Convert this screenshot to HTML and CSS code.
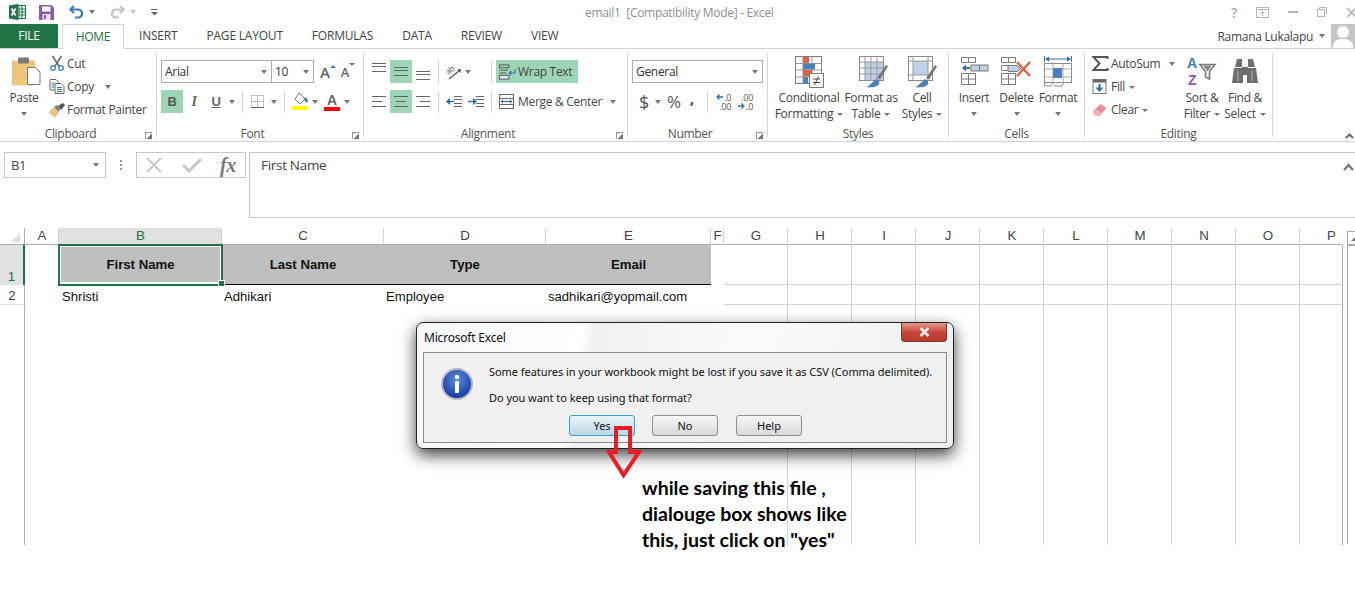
FILE: index.html
```html
<!DOCTYPE html>
<html lang="en">
<head>
<meta charset="UTF-8">
<title>email1 [Compatibility Mode] - Excel</title>
<link rel="stylesheet" href="styles.css">
</head>
<body>

<header class="titlebar">
  <div class="qat">
    <svg class="qat-logo" width="17" height="16" viewBox="0 0 17 16"><rect x="6" y="1.500" width="10.500" height="13" fill="#fff" stroke="#217346"/><path d="M10 2v12M13 2v12M7 5h9M7 8h9M7 11h9" stroke="#217346"/><path d="M0 1.500 9 0v16L0 14.500z" fill="#217346"/><path d="M2.500 4.500 6.500 11.500M6.500 4.500 2.500 11.500" stroke="#fff" stroke-width="1.700"/></svg>
    <svg class="qat-save" width="15" height="15" viewBox="0 0 15 15"><path d="M0 0h12.500L15 2.500V15H0z" fill="#8b5ba8"/><rect x="3" y="1.500" width="8.500" height="5" fill="#fff"/><rect x="3.500" y="9" width="8" height="6" fill="#e9dff0"/><rect x="5" y="10" width="2" height="4" fill="#8b5ba8"/></svg>
    <svg class="qat-undo" width="15" height="14" viewBox="0 0 15 14"><path d="M5 1 1.500 4.500 5 8" fill="none" stroke="#3d7cb8" stroke-width="2.200"/><path d="M2 4.500h6.500c6 0 6 8 .5 8H6" fill="none" stroke="#3d7cb8" stroke-width="2.200"/></svg>
    <span class="caret qat-caret"></span>
    <svg class="qat-redo" width="15" height="14" viewBox="0 0 15 14"><path d="M10 1l3.500 3.500L10 8" fill="none" stroke="#c4c4c4" stroke-width="2.200"/><path d="M13 4.500H6.500c-6 0-6 8-.5 8h3" fill="none" stroke="#c4c4c4" stroke-width="2.200"/></svg>
    <span class="caret caret-off qat-caret"></span>
    <svg class="qat-more" width="7" height="7" viewBox="0 0 7 7"><path d="M0 .5h6.500" stroke="#666"/><path d="M0 3h7L3.500 6.500z" fill="#666"/></svg>
  </div>
  <div class="doc-title">email1&nbsp; [Compatibility Mode] - Excel</div>
  <div class="win-controls">
    <span class="help-mark">?</span>
    <svg width="13" height="11" viewBox="0 0 13 11"><rect x=".5" y=".5" width="12" height="10" fill="none" stroke="#b5b5b5"/><path d="M.5 2.500h12" stroke="#b5b5b5"/><path d="M6.500 9V5M4.500 6.500l2-2 2 2" fill="none" stroke="#b5b5b5"/></svg>
    <svg width="10" height="2" viewBox="0 0 10 2"><rect width="10" height="2" fill="#b5b5b5"/></svg>
    <svg width="10" height="10" viewBox="0 0 10 10"><path d="M2.500 2.500V.5h7v6h-2" fill="none" stroke="#b5b5b5"/><rect x=".5" y="2.500" width="7" height="7" fill="none" stroke="#b5b5b5"/></svg>
    <svg width="11" height="11" viewBox="0 0 11 11"><path d="M1 1l9 9M10 1l-9 9" stroke="#b5b5b5" stroke-width="1.600"/></svg>
  </div>
</header>

<nav class="tabs">
  <div class="tab-file">FILE</div>
  <div class="tab-home">HOME</div>
  <div class="tab">INSERT</div>
  <div class="tab">PAGE LAYOUT</div>
  <div class="tab">FORMULAS</div>
  <div class="tab">DATA</div>
  <div class="tab">REVIEW</div>
  <div class="tab">VIEW</div>
  <div class="account">
    <span>Ramana Lukalapu</span>
    <span class="caret"></span>
    <svg class="avatar" width="24" height="24" viewBox="0 0 24 24"><rect width="24" height="24" fill="#c6c6c6"/><circle cx="12" cy="8" r="6" fill="#fff"/><path d="M2 24c0-7 4-9 10-9s10 2 10 9z" fill="#fff"/></svg>
  </div>
</nav>

<section class="ribbon">

  <div class="group group-clipboard">
    <div class="group-body">
      <div class="big big-paste">
        <svg width="29" height="31" viewBox="0 0 29 31"><rect x="0" y="4" width="23" height="25" rx="1" fill="#edc57d"/><rect x="6" y="1" width="11" height="6" rx="1" fill="#7a7a7a"/><path d="M15.500 11h8l4.500 4.500V28h-12.500z" fill="#fff" stroke="#7a7a7a"/></svg>
        <span>Paste</span>
        <span class="caret"></span>
      </div>
      <div class="stack">
        <div class="small-row"><svg width="14" height="15" viewBox="0 0 14 15"><path d="M2.500 0 9 10M11.500 0 5 10" stroke="#666" stroke-width="1.500"/><circle cx="3" cy="12" r="2.300" fill="none" stroke="#3d7cb8" stroke-width="1.300"/><circle cx="11" cy="12" r="2.300" fill="none" stroke="#3d7cb8" stroke-width="1.300"/></svg><span>Cut</span></div>
        <div class="small-row"><svg width="15" height="15" viewBox="0 0 15 15"><path d="M.5.500h6l2 2V11H.500z" fill="#fff" stroke="#666"/><path d="M5.500 4.500h6l3 3V14.500h-9z" fill="#fff" stroke="#666"/><path d="M2 4h3M2 6h3M2 8h3M7.500 8.500h5M7.500 10.500h5M7.500 12.500h5" stroke="#3d7cb8"/></svg><span>Copy</span><span class="caret caret-copy"></span></div>
        <div class="small-row"><svg width="16" height="14" viewBox="0 0 16 14"><path d="M0 9 5 4l5 5-3 5c-3 0-5-2-7-5z" fill="#edc57d"/><path d="M5 4l3-2 3 4-1 3z" fill="#7a7a7a"/><path d="M9 3l5-3 2 2-4 5z" fill="#555"/></svg><span>Format Painter</span></div>
      </div>
    </div>
    <div class="group-label label-launch">Clipboard<span class="launcher"></span></div>
  </div>

  <div class="group group-font">
    <div class="group-body tool-rows">
      <div class="tool-row">
        <div class="select font-name"><span>Arial</span><span class="caret"></span></div>
        <div class="select font-size"><span>10</span><span class="caret"></span></div>
        <div class="grow-a">A<i class="tick tick-up"></i></div>
        <div class="shrink-a">A<i class="tick tick-down"></i></div>
      </div>
      <div class="tool-row">
        <div class="tool tool-on font-b">B</div>
        <div class="tool font-i">I</div>
        <div class="tool font-u">U</div>
        <span class="caret caret-u"></span>
        <span class="tool-sep sep-font1"></span>
        <svg class="border-icon" width="13" height="13" viewBox="0 0 13 13"><path d="M.5.500h12v12H.500zM6.500.500v12M.5 6.500h12" fill="none" stroke="#888" stroke-dasharray="1 1"/><path d="M0 12.500h13" stroke="#666"/></svg>
        <span class="caret"></span>
        <span class="tool-sep sep-font2"></span>
        <svg class="fill-icon" width="17" height="18" viewBox="0 0 17 18"><path d="M7 0l6 6-5 5-5-5z" fill="#fff" stroke="#777"/><path d="M13 4l3 3-1 3-2-2z" fill="#3d7cb8"/><rect y="13" width="16" height="4" fill="#ffff00"/></svg>
        <span class="caret"></span>
        <div class="color-a">A</div>
        <span class="caret"></span>
      </div>
    </div>
    <div class="group-label label-launch">Font<span class="launcher"></span></div>
  </div>

  <div class="group group-align">
    <div class="group-body tool-rows">
      <div class="tool-row">
        <div class="tool"><i class="lines lines-top"></i></div>
        <div class="tool tool-on"><i class="lines"></i></div>
        <div class="tool"><i class="lines lines-bottom"></i></div>
        <span class="tool-sep sep-a1"></span>
        <svg class="orient-icon" width="16" height="16" viewBox="0 0 16 16"><text x="0" y="9" transform="rotate(-40 4 7)" class="orient-text">ab</text><path d="M3 15 14 6" stroke="#555" stroke-width="1.200"/><path d="M15 5l-4 .5L14.500 9z" fill="#555"/></svg>
        <span class="caret caret-orient"></span>
        <span class="tool-sep sep-a2"></span>
        <div class="wrap-text">
          <svg width="17" height="16" viewBox="0 0 18 16"><rect x=".5" y=".5" width="10" height="3" fill="none" stroke="#555"/><path d="M.5 6h9M.5 9h7" stroke="#555"/><rect x=".5" y="11.500" width="10" height="4" fill="#dde9f3" stroke="#555"/><path d="M17 5v4h-6M13 7l-2 2 2 2" fill="none" stroke="#2f6ea8" stroke-width="1.200"/></svg>
          <span>Wrap Text</span>
        </div>
      </div>
      <div class="tool-row">
        <div class="tool"><i class="lines lines-left"></i></div>
        <div class="tool tool-on"><i class="lines lines-center"></i></div>
        <div class="tool"><i class="lines lines-right"></i></div>
        <span class="tool-sep sep-a1"></span>
        <svg width="17" height="11" viewBox="0 0 17 11"><path d="M8 .5h8M8 3.500h8M8 7.500h8M8 10.500h8M1 5.500h6" stroke="#666"/><path d="M0 5.500 4 2v7z" fill="#2f6ea8"/><path d="M1 5.500h7" stroke="#2f6ea8" stroke-width="1.400"/></svg>
        <svg class="indent-two" width="17" height="11" viewBox="0 0 17 11"><path d="M8 .5h8M8 3.500h8M8 7.500h8M8 10.500h8" stroke="#666"/><path d="M9 5.500 5 2v7z" fill="#2f6ea8"/><path d="M0 5.500h7" stroke="#2f6ea8" stroke-width="1.400"/></svg>
        <span class="tool-sep sep-a3"></span>
        <div class="merge">
          <svg width="15" height="15" viewBox="0 0 15 15"><rect x=".5" y=".5" width="14" height="14" fill="#fff" stroke="#666"/><path d="M.5 4.500h14M.5 10.500h14" stroke="#666"/><path d="M3 7.500h9" stroke="#2f6ea8"/><path d="M1.500 7.500 4 5.500v4zM13.500 7.500 11 5.500v4z" fill="#2f6ea8"/></svg>
          <span>Merge &amp; Center</span>
          <span class="caret caret-merge"></span>
        </div>
      </div>
    </div>
    <div class="group-label label-launch">Alignment<span class="launcher"></span></div>
  </div>

  <div class="group group-number">
    <div class="group-body tool-rows">
      <div class="tool-row">
        <div class="select number-format"><span>General</span><span class="caret"></span></div>
      </div>
      <div class="tool-row number-tools">
        <span class="num-dollar">$</span>
        <span class="caret"></span>
        <span class="num-percent">%</span>
        <span class="num-comma">,</span>
        <span class="tool-sep sep-n"></span>
        <div class="decimal">
          <span class="dec-line"><svg width="7" height="6" viewBox="0 0 7 6"><path d="M7 3H2M3.500.5 1 3l2.500 2.500" fill="none" stroke="#2f6ea8" stroke-width="1.300"/></svg>.0</span>
          <span class="dec-line">.00</span>
        </div>
        <div class="decimal decimal-two">
          <span class="dec-line">.00</span>
          <span class="dec-line"><svg width="7" height="6" viewBox="0 0 7 6"><path d="M0 3h5M3.500.5 6 3 3.500 5.500" fill="none" stroke="#2f6ea8" stroke-width="1.300"/></svg>.0</span>
        </div>
      </div>
    </div>
    <div class="group-label label-launch">Number<span class="launcher"></span></div>
  </div>

  <div class="group group-styles">
    <div class="group-body">
      <div class="big big-cond">
        <svg width="29" height="32" viewBox="0 0 29 32"><rect x=".5" y=".5" width="26" height="27" fill="#fff" stroke="#7a7a7a"/><path d="M.5 7.500h26M.5 14h26M.5 21h26M8 .5v27M17 .5v27" stroke="#9a9a9a"/><rect x="8" y="1" width="6" height="6" fill="#dd6442"/><rect x="8" y="7.500" width="12" height="6" fill="#4c82ba"/><rect x="8" y="14" width="9" height="6.500" fill="#dd6442"/><rect x="8" y="21" width="5" height="6.500" fill="#4c82ba"/><rect x="14.500" y="17.500" width="14" height="14" fill="#fff" stroke="#7a7a7a"/><path d="M18 23h7M18 26.500h7M23.500 20.500 19.500 29" stroke="#444"/></svg>
        <span>Conditional</span>
        <span>Formatting<i class="caret caret-text"></i></span>
      </div>
      <div class="big big-table">
        <svg width="29" height="32" viewBox="0 0 29 32"><rect x=".5" y=".5" width="24" height="24" fill="#fff" stroke="#8a8a8a"/><rect x="6" y="6" width="18" height="18" fill="#bdd0e6"/><path d="M.5 6h24M.5 12h24M.5 18h24M6 .500v24M12 .500v24M18 .500v24" stroke="#9a9a9a"/><path d="M18 22 27 9l2 1.500-8 13z" fill="#777"/><path d="M7 31c4-1 6-5 10-8 3 1 4 3 3 5-1 3-9 4-13 3z" fill="#4c82ba"/></svg>
        <span>Format as</span>
        <span>Table<i class="caret caret-text"></i></span>
      </div>
      <div class="big big-cell">
        <svg width="29" height="32" viewBox="0 0 29 32"><rect x=".5" y=".5" width="24" height="24" fill="#fff" stroke="#8a8a8a"/><rect x="5" y="5" width="15" height="14" fill="#bdd0e6"/><path d="M.5 5h24M.5 19h24M5 .500v24M20 .500v24" stroke="#9a9a9a"/><path d="M18 22 27 9l2 1.500-8 13z" fill="#777"/><path d="M7 31c4-1 6-5 10-8 3 1 4 3 3 5-1 3-9 4-13 3z" fill="#4c82ba"/></svg>
        <span>Cell</span>
        <span>Styles<i class="caret caret-text"></i></span>
      </div>
    </div>
    <div class="group-label">Styles</div>
  </div>

  <div class="group group-cells">
    <div class="group-body">
      <div class="big big-insert">
        <svg width="27" height="32" viewBox="0 0 27 32"><path d="M.5 1.500h14v5H.500zM7.500 1.500v5M.5 17.500h14v11H.500zM.5 23h14M7.500 17.500v11" fill="#fff" stroke="#7a7a7a"/><rect x="10" y="9" width="17" height="6" fill="#bdd0e6" stroke="#7a7a7a"/><path d="M18.500 9v6" stroke="#7a7a7a"/><path d="M1 12l4-3.500v2.500h4v2H5v2.500z" fill="#2f6ea8"/></svg>
        <span>Insert</span>
        <span class="caret"></span>
      </div>
      <div class="big big-delete">
        <svg width="31" height="32" viewBox="0 0 31 32"><path d="M.5 1.500h14v5H.500zM7.500 1.500v5M.5 17.500h14v11H.500zM.5 23h14M7.500 17.500v11M.5 9.500h14v5H.500z" fill="#fff" stroke="#7a7a7a"/><path d="M7 9.500h9l4 3-4 3H7z" fill="#bdd0e6" stroke="#7a7a7a"/><path d="M16 6l13 14M29 6 16 20" stroke="#dd6442" stroke-width="2.400"/></svg>
        <span>Delete</span>
        <span class="caret"></span>
      </div>
      <div class="big big-format">
        <svg width="29" height="32" viewBox="0 0 29 32"><path d="M.5 0v6M27.500 0v6" stroke="#2f6ea8"/><path d="M2 3h24" stroke="#2f6ea8"/><path d="M1 3l4-2.500v5zM27 3l-4-2.500v5z" fill="#2f6ea8"/><rect x=".5" y="7.500" width="27" height="19" fill="#fff" stroke="#8a8a8a"/><path d="M.5 13h27M.5 21h27M9 7.500v19M19 7.500v19" stroke="#aaa"/><rect x="9" y="12" width="9" height="10" fill="#4c82ba"/><path d="M.5 27v3h6l3-3M10 30h7l3-3" fill="none" stroke="#8a8a8a"/></svg>
        <span>Format</span>
        <span class="caret"></span>
      </div>
    </div>
    <div class="group-label">Cells</div>
  </div>

  <div class="group group-editing">
    <div class="group-body">
      <div class="stack stack-edit">
        <div class="small-row"><svg width="15" height="15" viewBox="0 0 15 15"><path d="M15 3V1H1l6 6.500L1 14h14v-2" fill="none" stroke="#555" stroke-width="2"/></svg><span>AutoSum</span><span class="caret caret-sum"></span></div>
        <div class="small-row"><svg width="15" height="15" viewBox="0 0 15 15"><rect x=".5" y=".5" width="13" height="14" fill="#fff" stroke="#777"/><rect x=".5" y=".5" width="13" height="3" fill="#666"/><path d="M7 5v6" stroke="#2f6ea8" stroke-width="2"/><path d="M3 8.500h8l-4 4.500z" fill="#2f6ea8"/></svg><span>Fill<i class="caret caret-text"></i></span></div>
        <div class="small-row"><svg width="15" height="14" viewBox="0 0 15 14"><path d="M0 9 8 1l6 4-7 8H3z" fill="#ea8c97"/><path d="M0 9l3 4h4l2-2.500-5-4z" fill="#f3b6bd"/></svg><span>Clear<i class="caret caret-text"></i></span></div>
      </div>
      <div class="big big-sort">
        <svg width="30" height="32" viewBox="0 0 30 32"><text x="0" y="12" class="az az-a">A</text><text x="1" y="28.500" class="az az-z">Z</text><path d="M13 8.500h15l-5.500 7V23l-4-2v-5.500z" fill="#fff" stroke="#777" stroke-width="1.600"/><path d="M16 9.500h9l-4.500 6z" fill="#888"/></svg>
        <span>Sort &amp;</span>
        <span>Filter<i class="caret caret-text"></i></span>
      </div>
      <div class="big big-find">
        <svg width="26" height="26" viewBox="0 0 26 26"><path d="M3 8 5 0h5v8zM16 8V0h5l2 8z" fill="#6e6e6e"/><path d="M0 24 2 9h9v15zM15 24V9h9l2 15z" fill="#6e6e6e"/><rect x="10" y="8" width="6" height="8" fill="#6e6e6e"/><path d="M6 12v10M20 12v10" stroke="#b8b8b8"/></svg>
        <span>Find &amp;</span>
        <span>Select<i class="caret caret-text"></i></span>
      </div>
    </div>
    <div class="group-label">Editing</div>
  </div>

  <svg class="ribbon-collapse" width="9" height="6" viewBox="0 0 9 6"><path d="M1 5l3.500-3.500L8 5" fill="none" stroke="#666" stroke-width="2"/></svg>
</section>

<section class="formula-bar">
  <div class="name-box"><span>B1</span><span class="caret"></span></div>
  <div class="dots"><i></i><i></i><i></i></div>
  <div class="fx-box">
    <svg width="20" height="17" viewBox="0 0 20 17"><path d="M2 1l14 14M16 1 2 15" stroke="#c8c8c8" stroke-width="2"/></svg>
    <svg width="20" height="16" viewBox="0 0 20 16"><path d="M1 8l6 6L19 2" fill="none" stroke="#c8c8c8" stroke-width="3"/></svg>
    <span class="fx-mark">fx</span>
  </div>
  <div class="formula-input">
    <span>First Name</span>
    <svg class="formula-chevron" width="11" height="8" viewBox="0 0 11 8"><path d="M1 7l4.500-5L10 7" fill="none" stroke="#777" stroke-width="2.400"/></svg>
  </div>
</section>

<section class="sheet">
  <div class="grid">
    <div class="col-head corner"><i class="corner-mark"></i></div>
    <div class="col-head">A</div>
    <div class="col-head col-active">B</div>
    <div class="col-head">C</div>
    <div class="col-head">D</div>
    <div class="col-head">E</div>
    <div class="col-head">F</div>
    <div class="col-head">G</div>
    <div class="col-head">H</div>
    <div class="col-head">I</div>
    <div class="col-head">J</div>
    <div class="col-head">K</div>
    <div class="col-head">L</div>
    <div class="col-head">M</div>
    <div class="col-head">N</div>
    <div class="col-head">O</div>
    <div class="col-head col-last">P</div>

    <div class="row-head row-active">1</div>
    <div class="cell"></div>
    <div class="cell cell-title cell-selected">First Name</div>
    <div class="cell cell-title">Last Name</div>
    <div class="cell cell-title">Type</div>
    <div class="cell cell-title">Email</div>
    <div class="cell"></div>
    <div class="cell cell-line"></div>
    <div class="cell cell-line"></div>
    <div class="cell cell-line"></div>
    <div class="cell cell-line"></div>
    <div class="cell cell-line"></div>
    <div class="cell cell-line"></div>
    <div class="cell cell-line"></div>
    <div class="cell cell-line"></div>
    <div class="cell cell-line"></div>
    <div class="cell cell-line"></div>

    <div class="row-head row-two">2</div>
    <div class="cell"></div>
    <div class="cell cell-text cell-text-first">Shristi</div>
    <div class="cell cell-text">Adhikari</div>
    <div class="cell cell-text">Employee</div>
    <div class="cell cell-text">sadhikari@yopmail.com</div>
    <div class="cell"></div>
    <div class="cell cell-line"></div>
    <div class="cell cell-line"></div>
    <div class="cell cell-line"></div>
    <div class="cell cell-line"></div>
    <div class="cell cell-line"></div>
    <div class="cell cell-line"></div>
    <div class="cell cell-line"></div>
    <div class="cell cell-line"></div>
    <div class="cell cell-line"></div>
    <div class="cell cell-line"></div>

    <div class="row-head row-rest"></div>
    <div class="cell cell-blank"></div>
    <div class="cell cell-v"></div>
    <div class="cell cell-v"></div>
    <div class="cell cell-v"></div>
    <div class="cell cell-v"></div>
    <div class="cell cell-v"></div>
    <div class="cell cell-v"></div>
    <div class="cell cell-v"></div>
    <div class="cell cell-v"></div>
    <div class="cell cell-v"></div>
    <div class="cell cell-v"></div>
  </div>
  <div class="vscroll"><div class="vscroll-up"><span></span></div></div>
</section>

<div class="dialog">
  <div class="dialog-title">
    <span>Microsoft Excel</span>
    <div class="dialog-close"><svg width="11" height="10" viewBox="0 0 11 10"><path d="M1.500 1l8 8M9.500 1l-8 8" stroke="#f4e8e6" stroke-width="2.600"/></svg></div>
  </div>
  <div class="dialog-panel">
    <div class="dialog-message">
      <svg class="info-icon" width="32" height="32" viewBox="0 0 32 32">
        <defs><radialGradient id="infoFill" cx="50%" cy="35%" r="65%"><stop offset="0" stop-color="#5f8fe0"/><stop offset="1" stop-color="#10349c"/></radialGradient></defs>
        <circle cx="16" cy="16" r="15" fill="url(#infoFill)" stroke="#b4b8c4" stroke-width="2"/>
        <circle cx="16" cy="9" r="2.200" fill="#fff"/>
        <rect x="14" y="13" width="4" height="12" rx="1" fill="#fff"/>
      </svg>
      <div class="dialog-text">
        <p>Some features in your workbook might be lost if you save it as CSV (Comma delimited).</p>
        <p>Do you want to keep using that format?</p>
      </div>
    </div>
    <div class="dialog-buttons">
      <div class="btn btn-default">Yes</div>
      <div class="btn">No</div>
      <div class="btn btn-help">Help</div>
    </div>
  </div>
</div>

<svg class="callout-arrow" width="38" height="53" viewBox="0 0 38 53"><path d="M10 2h14v24h9L17.500 49 3 26h7z" fill="none" stroke="#ed1c24" stroke-width="4"/></svg>
<div class="callout-note">while saving this file ,<br>dialouge box shows like<br>this, just click on "yes"</div>

</body>
</html>
```

FILE: styles.css
```css
body {
  margin: 0;
  width: 1355px;
  height: 598px;
  overflow: hidden;
  background-color: #fff;
  font-family: "Open Sans", sans-serif;
  font-size: 12px;
  letter-spacing: -0.3px;
  color: #444;
  position: relative;
}

svg {
  display: block;
  flex: none;
  overflow: visible;
}

.caret {
  display: inline-block;
  flex: none;
  width: 0;
  height: 0;
  border-left: 3.5px solid transparent;
  border-right: 3.5px solid transparent;
  border-top: 4px solid #777;
}

.caret-off {
  border-top-color: #c4c4c4;
}

.caret-text {
  margin-left: 4px;
  vertical-align: 2px;
  border-left-width: 3px;
  border-right-width: 3px;
  border-top-width: 3px;
}

/* title bar */
.titlebar {
  height: 24px;
  display: flex;
  align-items: center;
}

.qat {
  width: 380px;
  display: flex;
  align-items: center;
  padding-left: 9px;
  box-sizing: border-box;
}

.qat-save {
  margin-left: 13px;
}

.qat-undo {
  margin-left: 15px;
}

.qat-caret {
  margin-left: 5px;
}

.qat-redo {
  margin-left: 15px;
}

.qat-more {
  margin-left: 15px;
}

.doc-title {
  color: #8f8f8f;
  margin-left: 205px;
  white-space: nowrap;
}

.win-controls {
  margin-left: auto;
  width: 124px;
  display: flex;
  align-items: center;
  gap: 19px;
}

.help-mark {
  font-weight: 700;
  font-size: 14px;
  color: #b5b5b5;
}

/* tabs */
.tabs {
  height: 25px;
  box-sizing: border-box;
  display: flex;
  border-bottom: 1px solid #d4d4d4;
}

.tab-file {
  width: 58px;
  height: 24px;
  background-color: #217346;
  color: #fff;
  text-align: center;
  line-height: 24px;
}

.tab-home {
  width: 62px;
  height: 25px;
  margin-left: 4px;
  box-sizing: border-box;
  background-color: #fff;
  border: 1px solid #d4d4d4;
  border-bottom: none;
  color: #217346;
  text-align: center;
  line-height: 24px;
}

.tab {
  margin-left: 29px;
  line-height: 24px;
  letter-spacing: -0.2px;
}

.tab:nth-of-type(3) {
  margin-left: 15px;
}

.account {
  margin-left: auto;
  display: flex;
  align-items: center;
  height: 24px;
}

.account .caret {
  margin: 0 6px 0 6px;
}

/* ribbon */
.ribbon {
  height: 93px;
  box-sizing: border-box;
  border-bottom: 1px solid #d4d4d4;
  padding-top: 4px;
  display: flex;
  align-items: flex-start;
  position: relative;
}

.ribbon-collapse {
  position: absolute;
  right: 1px;
  bottom: 2px;
}

.group {
  height: 84px;
  box-sizing: border-box;
  border-right: 1px solid #d4d4d4;
  position: relative;
  flex: none;
}

.group-body {
  display: flex;
  height: 71px;
}

.group-label {
  text-align: center;
  color: #555;
  line-height: 16px;
  margin-top: 2px;
}

.label-launch {
  padding-right: 15px;
}

.launcher {
  position: absolute;
  right: 4px;
  bottom: -2px;
  width: 6px;
  height: 6px;
  border-left: 1px solid #999;
  border-top: 1px solid #999;
  background: linear-gradient(135deg, transparent 55%, #777 55%);
}

.group-clipboard { width: 157px; }
.group-font { width: 207px; }
.group-align { width: 264px; }
.group-number { width: 140px; }
.group-styles { width: 181px; }
.group-cells { width: 136px; }
.group-editing { width: 188px; }

.big {
  display: flex;
  flex-direction: column;
  align-items: center;
  line-height: 16px;
  padding-top: 3px;
  white-space: nowrap;
}

.big svg {
  margin-bottom: 2px;
  height: 32px;
}

.big .caret {
  margin-top: 6px;
}

.big-paste {
  width: 38px;
  margin-left: 5px;
}

.big-paste svg {
  margin-left: 4px;
}

.stack {
  margin-left: 6px;
  margin-top: -1px;
  display: flex;
  flex-direction: column;
}

.small-row {
  height: 23px;
  display: flex;
  align-items: center;
  white-space: nowrap;
}

.small-row svg {
  width: 16px;
  margin-right: 2px;
}

.caret-copy {
  margin-left: 11px;
}

/* font and alignment rows */
.tool-rows {
  flex-direction: column;
  padding-top: 7px;
  padding-left: 4px;
  gap: 7px;
  box-sizing: border-box;
}

.tool-row {
  display: flex;
  align-items: center;
  height: 23px;
}

.select {
  height: 23px;
  box-sizing: border-box;
  border: 1px solid #ababab;
  display: flex;
  align-items: center;
  justify-content: space-between;
  padding: 0 4px 0 3px;
  background-color: #fff;
  color: #333;
}

.font-name { width: 111px; }
.font-size { width: 43px; margin-left: -1px; }

.grow-a, .shrink-a {
  position: relative;
  font-size: 15px;
  font-weight: 600;
  color: #666;
}

.grow-a { margin-left: 6px; }
.shrink-a { margin-left: 11px; font-size: 13px; }

.tick {
  position: absolute;
  right: -6px;
  top: 3px;
  border-left: 3px solid transparent;
  border-right: 3px solid transparent;
}

.tick-up { border-bottom: 3px solid #3d7cb8; }
.tick-down { border-top: 3px solid #3d7cb8; top: 0; }

.tool {
  width: 22px;
  height: 23px;
  display: flex;
  align-items: center;
  justify-content: center;
  flex: none;
}

.tool-on {
  background-color: #9fd5b7;
}

.font-b { font-weight: 700; font-family: "Liberation Sans", sans-serif; font-size: 13px; color: #555; }
.font-i { font-style: italic; font-weight: 700; font-family: "Liberation Serif", serif; font-size: 14px; color: #666; }
.font-u { font-weight: 700; font-family: "Liberation Sans", sans-serif; font-size: 13px; text-decoration: underline; color: #666; }

.caret-u { margin-left: 2px; }

.tool-sep {
  width: 1px;
  height: 22px;
  background-color: #d4d4d4;
  flex: none;
}

.sep-font1 { margin: 0 8px 0 7px; }
.sep-font2 { margin: 0 7px 0 7px; }

.border-icon { margin-right: 7px; }
.fill-icon { margin-right: 3px; }

.color-a {
  margin-left: 6px;
  margin-right: 4px;
  width: 16px;
  font-family: "Liberation Sans", sans-serif;
  font-weight: 700;
  font-size: 14px;
  line-height: 14px;
  text-align: center;
  color: #666;
  border-bottom: 4px solid #ff0000;
}

/* alignment lines */
.lines {
  display: block;
  width: 14px;
  height: 7px;
  border-top: 1px solid #666;
  border-bottom: 1px solid #666;
  position: relative;
}

.lines::after {
  content: "";
  position: absolute;
  left: 0;
  right: 0;
  top: 2px;
  height: 1px;
  background-color: #666;
}

.lines-top { align-self: flex-start; margin-top: 3px; }
.lines-bottom { align-self: flex-end; margin-bottom: 3px; }

.lines-left, .lines-center, .lines-right {
  height: 9px;
}

.lines-left::after { right: 4px; top: 4px; }
.lines-center::after { left: 2px; right: 2px; top: 4px; }
.lines-right::after { left: 4px; top: 4px; }

.sep-a1 { margin: 0 7px 0 4px; }
.sep-a2 { margin: 0 4px 0 20px; }
.sep-a3 { margin: 0 7px 0 6px; }

.orient-text {
  font-family: "Open Sans", sans-serif;
  font-size: 8px;
  fill: #555;
}

.caret-orient { margin-left: 3px; }
.indent-two { margin-left: 5px; }

.wrap-text {
  width: 82px;
  height: 23px;
  background-color: #9fd5b7;
  display: flex;
  align-items: center;
  gap: 2px;
  padding-left: 3px;
  box-sizing: border-box;
}

.merge {
  display: flex;
  align-items: center;
  gap: 4px;
  white-space: nowrap;
}

.caret-merge { margin-left: 4px; }

/* number */
.number-format { width: 131px; padding-left: 3px; }

.number-tools { padding-left: 7px; }

.num-dollar { font-size: 18px; color: #555; width: 10px; text-align: center; }
.number-tools > .caret { margin-left: 6px; }
.num-percent { font-size: 17px; color: #555; margin-left: 6px; }
.num-comma { font-size: 16px; font-weight: 700; color: #555; margin-left: 9px; margin-top: -7px; }
.sep-n { margin: 0 7px 0 13px; }

.decimal {
  display: flex;
  flex-direction: column;
  align-items: flex-end;
  font-size: 9px;
  line-height: 9px;
  width: 16px;
  color: #555;
  white-space: nowrap;
}

.decimal-two { margin-left: 6px; }

.dec-line {
  display: flex;
  align-items: center;
  gap: 1px;
}

/* styles / cells / editing big buttons */
.group-styles .group-body { padding-left: 1px; }
.big-cond { width: 80px; }
.big-table { width: 64px; margin-left: -10px; }
.big-table svg { margin-left: 4px; }
.big-cell { width: 38px; }

.group-cells .group-body { padding-left: 5px; }
.big-insert { width: 40px; }
.big-delete { width: 43px; margin-left: 1px; }
.big-format { width: 40px; }

.stack-edit { margin-left: 7px; width: 90px; }
.stack-edit svg { margin-right: 3px; }
.caret-sum { margin-left: 9px; }
.big-sort { width: 40px; }
.big-find { width: 44px; margin-left: 1px; }

.az {
  font-family: "Liberation Sans", sans-serif;
  font-weight: 700;
  font-size: 14px;
}

.az-a { fill: #3d7cb8; }
.az-z { fill: #8b5ba8; }

/* formula bar */
.formula-bar {
  margin-top: 10px;
  height: 66px;
  display: flex;
  align-items: flex-start;
}

.name-box {
  margin-left: 4px;
  width: 102px;
  height: 26px;
  box-sizing: border-box;
  border: 1px solid #c6c6c6;
  display: flex;
  align-items: center;
  justify-content: space-between;
  padding: 0 6px;
  color: #444;
  font-size: 13px;
}

.dots {
  width: 30px;
  height: 26px;
  display: flex;
  flex-direction: column;
  align-items: center;
  justify-content: center;
  gap: 2px;
}

.dots i {
  width: 2px;
  height: 2px;
  background-color: #999;
}

.fx-box {
  width: 110px;
  height: 26px;
  box-sizing: border-box;
  border: 1px solid #c6c6c6;
  display: flex;
  align-items: center;
  justify-content: space-between;
  padding: 0 9px 0 8px;
}

.fx-mark {
  font-family: "Liberation Serif", serif;
  font-style: italic;
  font-weight: 700;
  font-size: 20px;
  color: #777;
  line-height: 20px;
}

.formula-input {
  flex: 1;
  height: 66px;
  margin-left: 3px;
  box-sizing: border-box;
  border: 1px solid #c6c6c6;
  border-right: none;
  padding: 3px 1px 0 11px;
  display: flex;
  justify-content: space-between;
  align-items: flex-start;
  font-size: 13.5px;
}

.formula-chevron {
  margin-top: 7px;
}

/* sheet */
.sheet {
  margin-top: 10px;
  display: flex;
  align-items: flex-start;
  font-family: "Liberation Sans", sans-serif;
  letter-spacing: 0;
}

.grid {
  display: grid;
  grid-template-columns: 25px 34px 163px 162px 162px 165px 13px repeat(9, 64px) 43px;
  grid-template-rows: 17px 40px 20px 240px;
  width: 1344px;
}

.col-head {
  box-sizing: border-box;
  border-right: 1px solid #d4d4d4;
  border-bottom: 1px solid #ababab;
  text-align: center;
  line-height: 16px;
  font-size: 13.33px;
  color: #444;
  padding-left: 1px;
}

.corner {
  position: relative;
  border-right-color: #ababab;
}

.corner-mark {
  position: absolute;
  right: 4px;
  bottom: 2px;
  border-left: 9px solid transparent;
  border-bottom: 9px solid #dedede;
}

.col-active {
  background-color: #e1e1e1;
  color: #217346;
  border-bottom-color: #217346;
}

.col-last {
  border-right: 1px solid transparent;
  text-align: right;
  padding-right: 6px;
}

.row-head {
  box-sizing: border-box;
  border-right: 1px solid #ababab;
  text-align: center;
  font-size: 13.33px;
  color: #444;
}

.row-active {
  background-color: #e1e1e1;
  color: #217346;
  border-right: 2px solid #217346;
  line-height: 14px;
  padding-top: 25px;
}

.row-two {
  border-bottom: 1px solid #e1e1e1;
  line-height: 22px;
}

.cell {
  box-sizing: border-box;
  min-width: 0;
  white-space: nowrap;
}

.cell-title {
  background-color: #bfbfbf;
  border-bottom: 1px solid #000;
  font-weight: 700;
  font-size: 13.2px;
  color: #111;
  text-align: center;
  line-height: 39px;
}

.cell-selected {
  position: relative;
  outline: 2px solid #217346;
  outline-offset: -1px;
  box-shadow: inset 0 0 0 2px #fff;
  z-index: 1;
}

.cell-selected::after {
  content: "";
  position: absolute;
  right: -3px;
  bottom: -3px;
  width: 5px;
  height: 5px;
  background-color: #217346;
  border: 1px solid #fff;
}

.cell-text {
  font-size: 13.1px;
  color: #111;
  padding-left: 2px;
  line-height: 24px;
}

.cell-text-first {
  padding-left: 3px;
}

.cell-line {
  border-right: 1px solid #d4d4d4;
  border-bottom: 1px solid #d4d4d4;
}

.cell-line:nth-child(17n) {
  border-right-color: #ababab;
}

.cell-blank {
  grid-column: 2 / 8;
}

.cell-v {
  border-right: 1px solid #d4d4d4;
}

.cell-v:last-child {
  border-right-color: #ababab;
}

.vscroll {
  margin-left: 3px;
  width: 8px;
  height: 313px;
  margin-top: 3px;
  box-sizing: border-box;
  border-left: 1px solid #ababab;
  border-top: 1px solid #ababab;
}

.vscroll-up {
  height: 14px;
  border-bottom: 2px solid #ababab;
  padding: 5px 0 0 3px;
  box-sizing: border-box;
}

.vscroll-up span {
  display: block;
  width: 0;
  height: 0;
  border-left: 4px solid transparent;
  border-right: 4px solid transparent;
  border-bottom: 4px solid #777;
}

/* dialog sits over the sheet */
.dialog {
  position: absolute;
  left: 416px;
  top: 322px;
  width: 538px;
  height: 127px;
  box-sizing: border-box;
  border: 1px solid #222;
  border-radius: 7px;
  background: linear-gradient(100deg, #f4f7f9, #ffffff 30%, #eef1f3 32%, #fbfbfb 60%, #edf0f2);
  box-shadow: 0 6px 16px rgba(0, 0, 0, 0.75);
  padding: 0 6px;
  z-index: 5;
  font-family: "Noto Sans", sans-serif;
  font-size: 11px;
  letter-spacing: -0.05px;
  color: #111;
}

.dialog-title {
  height: 29px;
  display: flex;
  justify-content: space-between;
  font-size: 12px;
  letter-spacing: -0.2px;
  line-height: 29px;
  padding-left: 1px;
}

.dialog-close {
  width: 46px;
  height: 19px;
  box-sizing: border-box;
  border: 1px solid #7a3a33;
  border-top: none;
  border-radius: 0 0 4px 4px;
  background: linear-gradient(#e8998e, #c9473b 50%, #b5392c);
  display: flex;
  align-items: center;
  justify-content: center;
}

.dialog-panel {
  height: 91px;
  box-sizing: border-box;
  border: 1px solid #8a8a8a;
  background-color: #f0f0f0;
}

.dialog-message {
  display: flex;
  padding: 15px 0 0 17px;
}

.dialog-text {
  margin: -4px 0 0 16px;
}

.dialog-text p {
  margin: 0 0 11px;
  line-height: 15px;
  white-space: nowrap;
}

.dialog-text p:last-child {
  margin-bottom: 0;
}

.dialog-buttons {
  display: flex;
  margin-top: 10px;
  padding-left: 145px;
  gap: 17px;
}

.btn {
  width: 66px;
  height: 21px;
  box-sizing: border-box;
  border: 1px solid #8e8e8e;
  border-radius: 3px;
  background: linear-gradient(#f6f6f6, #e8e8e8 50%, #d8d8d8);
  text-align: center;
  line-height: 19px;
}

.btn-default {
  border-color: #3c9fd6;
  background: linear-gradient(#e9f3f9, #d5e6f0 50%, #bcd6e6);
}

.btn-help {
  margin-left: 1px;
}

.callout-arrow {
  position: absolute;
  left: 606px;
  top: 426px;
  z-index: 6;
}

.callout-note {
  position: absolute;
  left: 642px;
  top: 475px;
  z-index: 6;
  font-family: "Lato", sans-serif;
  font-weight: 700;
  font-size: 19.5px;
  line-height: 26px;
  letter-spacing: 0;
  color: #000;
  white-space: nowrap;
}
```
